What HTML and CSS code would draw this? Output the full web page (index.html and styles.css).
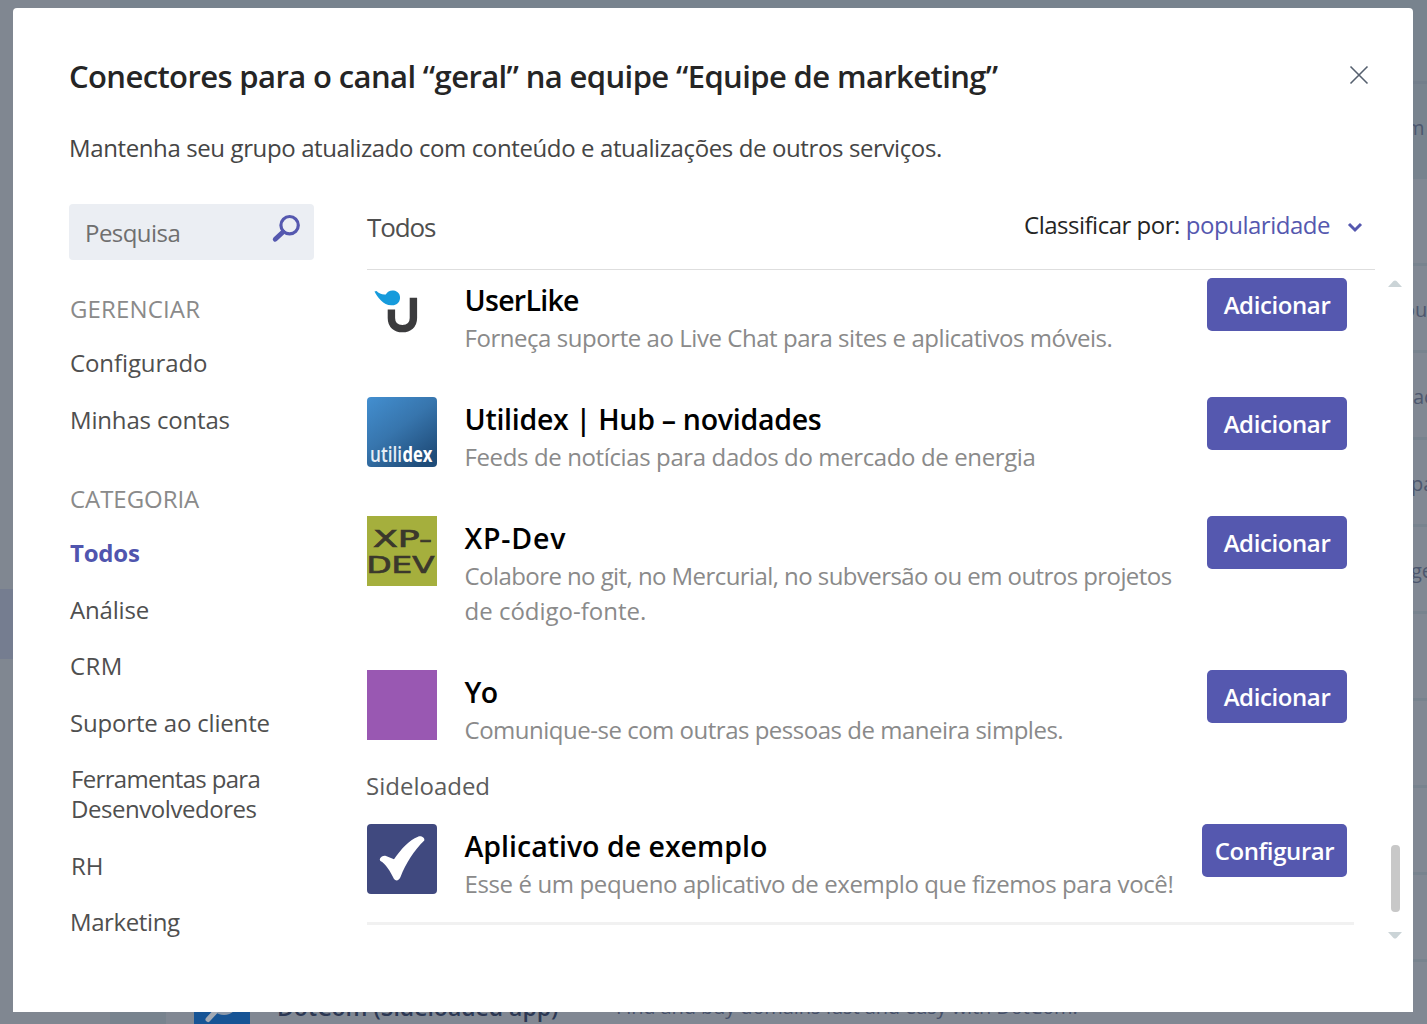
FILE: index.html
```html
<!DOCTYPE html>
<html lang="pt-BR">
<head>
<meta charset="utf-8">
<title>Conectores</title>
<link rel="stylesheet" href="styles.css">
</head>
<body>
<div class="backdrop" aria-hidden="true">
  <div class="rail"><div class="rail-active"></div></div>
  <div class="gutter"></div>
  <div class="apps">
    <div class="apps-top"></div>
    <div class="apps-head"><span class="cut cut-m">m</span></div>
    <div class="app-row first"></div>
    <div class="app-row"><span class="cut cut-ou">ou</span></div>
    <div class="app-row"><span class="cut cut-ac">ac</span></div>
    <div class="app-row"><span class="cut cut-pa">pa</span></div>
    <div class="app-row"><span class="cut cut-ge">ge</span></div>
    <div class="app-row"></div>
    <div class="app-row"></div>
    <div class="app-row"></div>
    <div class="app-row"></div>
    <div class="app-row dotcom">
      <svg class="dotcom-icon" width="56" height="60" viewBox="0 0 56 60"><rect width="56" height="60" fill="#175495"/><circle cx="30" cy="34" r="14" fill="#8d99aa"/><path d="M21 45L14 52.500" stroke="#a3a9b3" stroke-width="5" stroke-linecap="round"/></svg>
      <span class="dotcom-name">DotCom (Sideloaded app)</span>
      <span class="dotcom-desc">Find and buy domains fast and easy with DotCom.</span>
    </div>
  </div>
</div>

<div class="dialog" role="dialog">
  <header class="dialog-head">
    <h1>Conectores para o canal “geral” na equipe “Equipe de marketing”</h1>
    <svg class="close" width="20" height="20" viewBox="0 0 20 20"><path d="M1.500 1.500L18.500 18.500M18.500 1.500L1.500 18.500" stroke="#56606f" stroke-width="1.600"/></svg>
  </header>
  <p class="intro">Mantenha seu grupo atualizado com conteúdo e atualizações de outros serviços.</p>

  <div class="columns">
    <nav class="side">
      <div class="search">
        <span>Pesquisa</span>
        <svg width="30" height="30" viewBox="0 0 30 30"><circle cx="18.600" cy="11.200" r="8.700" fill="none" stroke="#5558af" stroke-width="3.200"/><path d="M12 18L4.200 25.300" stroke="#5558af" stroke-width="4.800" stroke-linecap="round"/></svg>
      </div>
      <h2 class="manage">GERENCIAR</h2>
      <ul>
        <li class="s-10">Configurado</li>
        <li class="s-15">Minhas contas</li>
      </ul>
      <h2 class="category">CATEGORIA</h2>
      <ul>
        <li class="current">Todos</li>
        <li class="s-15">Análise</li>
        <li class="crm">CRM</li>
        <li class="s-15">Suporte ao cliente</li>
        <li class="inset"><span class="s-60">Ferramentas para</span><br><span class="s-45">Desenvolvedores</span></li>
        <li class="inset">RH</li>
        <li class="s-35">Marketing</li>
      </ul>
    </nav>

    <main class="main">
      <div class="main-head">
        <h2>Todos</h2>
        <div class="sort"><span>Classificar por:</span><a>popularidade</a>
          <svg width="16" height="12" viewBox="0 0 16 12"><path d="M2 3L8 9L14 3" fill="none" stroke="#5558af" stroke-width="3"/></svg>
        </div>
      </div>
      <div class="scroller">
        <div class="list">
          <article class="item">
            <svg width="70" height="70" viewBox="0 0 70 70"><path d="M24.400 31.500V40C24.400 47 29 50.600 35.400 50.600S46.400 47 46.400 40V19.800" fill="none" stroke="#3b3b3d" stroke-width="7.400"/><path d="M7.500 13.500L9.500 13C12 15.500 15 17 18.800 16.500C20.500 13.500 23 12.200 26.500 12.500C31 13 33.500 16.500 33 20.500C32.500 25 29 27.500 25 27.300C20.500 27.500 17 25.500 14 22.500C11 19.500 9 16.500 7.500 13.500Z" fill="#169bdc"/></svg>
            <div class="text"><h3 class="t-userlike">UserLike</h3><p class="s-45">Forneça suporte ao Live Chat para sites e aplicativos móveis.</p></div>
            <button>Adicionar</button>
          </article>
          <article class="item">
            <svg width="70" height="70" viewBox="0 0 70 70"><defs><linearGradient id="blue" x1="0" y1="0" x2=".75" y2="1"><stop offset="0" stop-color="#438fd0"/><stop offset=".5" stop-color="#3775ad"/><stop offset="1" stop-color="#1f4c79"/></linearGradient></defs><rect width="70" height="70" rx="4" fill="url(#blue)"/><g class="utilidex"><text x="3" y="64.500" textLength="32" lengthAdjust="spacingAndGlyphs">utili</text><text class="dex" x="35.500" y="64.500" textLength="30" lengthAdjust="spacingAndGlyphs">dex</text></g></svg>
            <div class="text"><h3 class="t-utilidex">Utilidex | Hub – novidades</h3><p class="s-38">Feeds de notícias para dados do mercado de energia</p></div>
            <button>Adicionar</button>
          </article>
          <article class="item">
            <svg width="70" height="70" viewBox="0 0 70 70"><rect width="70" height="70" fill="#a5af3d"/><g class="xpdev"><text x="6" y="31.300" textLength="59" lengthAdjust="spacingAndGlyphs">XP-</text><text x="-.5" y="56.500" textLength="68" lengthAdjust="spacingAndGlyphs">DEV</text></g></svg>
            <div class="text"><h3 class="t-xpdev">XP-Dev</h3><p><span class="s-57">Colabore no git, no Mercurial, no subversão ou em outros projetos</span><br>de código-fonte.</p></div>
            <button>Adicionar</button>
          </article>
          <article class="item">
            <svg width="70" height="70" viewBox="0 0 70 70"><rect width="70" height="70" fill="#9958b2"/></svg>
            <div class="text"><h3 class="t-yo">Yo</h3><p class="s-49">Comunique-se com outras pessoas de maneira simples.</p></div>
            <button>Adicionar</button>
          </article>
          <h4>Sideloaded</h4>
          <article class="item">
            <svg width="70" height="70" viewBox="0 0 70 70"><rect width="70" height="70" rx="4" fill="#40497f"/><path d="M13 34.500C14 32.500 17 31 19 32L27 35.300C34 25 42 16 51 12.700C54 11.500 58 13.500 57.300 16.500C47 26.500 39 39 33.500 53C32 56.500 29 57.500 27 55C23 47 19 40 13.500 37C12.700 36.300 12.700 35.300 13 34.500Z" fill="#fff"/></svg>
            <div class="text"><h3>Aplicativo de exemplo</h3><p class="s-38">Esse é um pequeno aplicativo de exemplo que fizemos para você!</p></div>
            <button class="configure">Configurar</button>
          </article>
        </div>
        <div class="scrollbar">
          <svg width="14" height="7" viewBox="0 0 14 7"><path d="M0 7L5.500 1Q7 0 8.500 1L14 7Z" fill="#cbd4d7"/></svg>
          <div class="thumb"></div>
          <svg width="14" height="7" viewBox="0 0 14 7"><path d="M0 0L5.500 6Q7 7 8.500 6L14 0Z" fill="#cbd4d7"/></svg>
        </div>
      </div>
    </main>
  </div>
</div>
</body>
</html>
```
FILE: styles.css
```css
* { box-sizing: border-box; }
body {
  margin: 0;
  height: 1024px;
  overflow: hidden;
  position: relative;
  font-family: "Open Sans", "Noto Sans", sans-serif;
  font-size: 24px;
  line-height: 30px;
}
h1, h2, h3, h4, p, ul { margin: 0; padding: 0; font-weight: 400; font-size: inherit; }
ul { list-style: none; }
svg { display: block; flex: none; }

/* dimmed application behind the dialog */
.backdrop {
  display: grid;
  grid-template-columns: 110px 56px 1fr;
  height: 1024px;
  overflow: hidden;
  background: #818893;
}
.rail { padding-top: 589px; background: #808791; }
.rail-active { height: 70px; background: #757d90; }
.gutter { background: #78838e; }
.apps { min-width: 0; overflow: hidden; }
.apps-top { height: 81px; background: #78838e; }
.apps-head { height: 98px; border-top: 3px solid #737e8b; background: #78838e; padding-top: 29px; }
.app-row { height: 87px; border-top: 3px solid #78838e; padding-top: 29px; }
.app-row.first { height: 84px; border-top: 0; }
.cut { display: block; white-space: nowrap; font-size: 20px; line-height: 30px; color: #4d576e; }
.cut-m { margin-left: 1240px; }
.cut-ou { margin-left: 1237px; }
.cut-ac { margin-left: 1247px; }
.cut-pa { margin-left: 1245px; }
.cut-ge { margin-left: 1245px; }
.dotcom { display: flex; padding: 5px 0 0 28px; white-space: nowrap; color: #2c3853; }
.dotcom-name { width: 338px; padding: 25px 0 0 27px; font-size: 23px; font-weight: 600; }
.dotcom-desc { padding: 25px 0 0 28px; font-size: 20px; color: #465069; letter-spacing: -.1px; }

.dialog {
  position: absolute;
  left: 13px;
  top: 8px;
  width: 1400px;
  height: 1004px;
  padding: 48px 11px 0 56px;
  background: #fff;
  border-radius: 4px 4px 0 0;
}
.dialog-head { display: flex; justify-content: space-between; height: 68px; padding-right: 33px; }
h1 { font-size: 31px; line-height: 40px; font-weight: 600; letter-spacing: -.61px; color: #252525; }
.close { margin-top: 9px; }
.intro { height: 80px; line-height: 48px; color: #454545; letter-spacing: -.385px; }
.columns { display: grid; grid-template-columns: 245px 1035px; column-gap: 53px; }

/* left navigation */
.search {
  display: flex;
  justify-content: space-between;
  height: 56px;
  padding: 10px 13px 0 16px;
  border-radius: 4px;
  background: #ebeef3;
  color: #6f6f6f;
  letter-spacing: -.55px;
}
.search span { padding-top: 4px; }
.side { color: #4f4f4f; }
.side h2 { color: #8a8a8a; padding-left: 1px; }
.side .manage { margin: 34px 0 24px; letter-spacing: .15px; }
.side .category { margin: 49px 0 24.500px; letter-spacing: -.05px; }
.side ul { display: grid; row-gap: 26.500px; padding-left: 1px; }
.current { font-weight: 700; color: #5055ae; letter-spacing: -.2px; }
.crm { letter-spacing: .4px; }
.inset { padding-left: 1px; }

/* connector list */
.main-head {
  display: flex;
  justify-content: space-between;
  width: 1008px;
  height: 66px;
  padding-right: 12px;
  border-bottom: 1px solid #dedede;
}
.main-head h2 { font-size: 26px; line-height: 46px; letter-spacing: -1.1px; color: #4f4f4f; }
.sort { display: flex; line-height: 42px; color: #252525; letter-spacing: -.5px; }
.sort a { margin-left: 6px; color: #5558af; letter-spacing: -.48px; }
.sort svg { margin: 17px 0 0 17px; }
.scroller { display: flex; justify-content: space-between; }
.list { width: 987px; height: 655px; padding: 8px 7px 0 0; border-bottom: 3px solid #f1f1f1; }
.item { display: flex; align-items: flex-start; margin-bottom: 42px; }
.item:nth-last-of-type(2) { margin-bottom: 21px; }
.text { flex: 1; min-width: 0; padding: 4px 0 0 27.500px; white-space: nowrap; }
h3 { font-size: 28.500px; line-height: 36px; font-weight: 600; color: #000; }
.text p { margin-top: 2px; line-height: 35px; color: #8a8a8a; }
h4 { margin: 0 0 21px -1px; line-height: 35px; color: #5b5b5b; }
button {
  width: 140px;
  height: 53px;
  padding: 0;
  border: 0;
  border-radius: 5px;
  background: #5558af;
  color: #fff;
  font: 600 24px "Open Sans", "Noto Sans", sans-serif;
  letter-spacing: -.4px;
}
button.configure { width: 145px; }
.scrollbar { display: flex; flex-direction: column; align-items: center; width: 14px; padding-top: 10px; }
.thumb { width: 9px; height: 67px; margin: 558px 0 20px; border-radius: 4px; background: #c8c8c8; }

/* artwork lettering */
.utilidex { font: 600 22px "Open Sans", sans-serif; fill: #e6eef6; }
.dex { font-weight: 700; fill: #fff; }
.xpdev { font: 400 22.500px "DejaVu Sans", sans-serif; fill: #3b382c; stroke: #3b382c; stroke-width: .7px; }

/* tracking */
.s-10 { letter-spacing: -.1px; }
.s-15 { letter-spacing: -.17px; }
.s-35 { letter-spacing: -.4px; }
.s-38 { letter-spacing: -.38px; }
.s-45 { letter-spacing: -.45px; }
.s-49 { letter-spacing: -.49px; }
.s-57 { letter-spacing: -.57px; }
.s-60 { letter-spacing: -.68px; }
.t-userlike { letter-spacing: -.7px; }
.t-utilidex { letter-spacing: -.27px; }
.t-xpdev { letter-spacing: .8px; }
.t-yo { letter-spacing: -.6px; }
```
